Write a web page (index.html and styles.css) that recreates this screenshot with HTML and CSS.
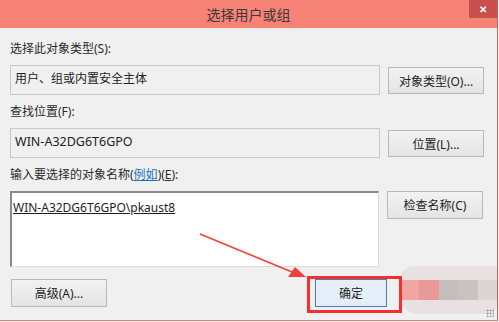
FILE: index.html
```html
<!DOCTYPE html>
<html lang="zh-CN">
<head>
  <meta charset="UTF-8" />
  <title>选择用户或组</title>
  <link rel="stylesheet" href="styles.css">
</head>
<body>
  <div class="window">
    <div class="title-bar">
      <span class="title">选择用户或组</span>
      <span class="close">&#10005;</span>
    </div>

    <div class="client">
      <div class="label">选择此对象类型(S):</div>
      <div class="row">
        <div class="field">用户、组或内置安全主体</div>
        <button class="btn">对象类型(O)...</button>
      </div>

      <div class="label">查找位置(F):</div>
      <div class="row">
        <div class="field latin">WIN-A32DG6T6GPO</div>
        <button class="btn">位置(L)...</button>
      </div>

      <div class="label">输入要选择的对象名称(<span class="link">例如</span>)(<u>E</u>):</div>
      <div class="row">
        <div class="names"><span class="name">WIN-A32DG6T6GPO\pkaust8</span></div>
        <button class="btn">检查名称(C)</button>
      </div>

      <div class="bottom-row">
        <button class="btn advanced">高级(A)...</button>
        <button class="btn ok">确定</button>
      </div>
    </div>

    <div class="blur">
      <span class="b1"></span><span class="b2"></span><span class="b3"></span><span class="b4"></span><span class="b5"></span>
    </div>
    <div class="highlight"></div>
    <svg class="arrow" width="499" height="322" viewBox="0 0 499 322">
      <line x1="200" y1="234" x2="292" y2="272" stroke="#f0403a" stroke-width="1.6" />
      <polygon points="306,277 288,277 295,267" fill="#f0403a" />
    </svg>
    <div class="grip"></div>
  </div>
</body>
</html>
```

FILE: styles.css
```css
* { box-sizing: border-box; }
html, body {
  margin: 0;
  padding: 0;
  background: #f0f0f0;
  font-family: "Noto Sans", "Noto Sans CJK SC", sans-serif;
  font-size: 12px;
  color: #222;
}
.window {
  position: relative;
  width: 498px;
  height: 321px;
  background: #f0f0f0;
  border-right: 1px solid #c9605a;
  border-bottom: 1px solid #d9837c;
  overflow: hidden;
}
.title-bar {
  position: relative;
  height: 28px;
  background: #f78276;
  display: flex;
  align-items: center;
  justify-content: center;
}
.title {
  font-family: "Noto Sans CJK SC", sans-serif;
  font-size: 14px;
  color: #3a3a3a;
}
.close {
  position: absolute;
  top: 0;
  right: 0;
  width: 28px;
  height: 18px;
  background: #c84f4d;
  color: #fff;
  font-size: 10px;
  font-weight: bold;
  display: flex;
  align-items: center;
  justify-content: center;
}
.client {
  padding: 13px 0 0 10px;
  display: flex;
  flex-direction: column;
}
.label {
  height: 16px;
  line-height: 16px;
  margin-bottom: 8px;
  color: #2a2a2a;
}
.link {
  color: #1a6fc4;
  text-decoration: underline;
}
.row {
  display: flex;
  align-items: flex-start;
  gap: 8px;
  margin-bottom: 9px;
}
.field {
  width: 370px;
  height: 30px;
  border: 1px solid #c8c8c8;
  background: #f0f0f0;
  padding: 4px 4px 0 4px;
  line-height: 18px;
}
.latin {
  font-size: 12.5px;
}
.names {
  width: 369px;
  height: 76px;
  background: #fff;
  border: 1px solid #dadada;
  border-top: 2px solid #8a8a8a;
  border-left: 2px solid #8a8a8a;
  padding: 6px 0 0 1px;
  line-height: 18px;
  font-size: 12px;
}
.name {
  text-decoration: underline;
  color: #1e1e1e;
}
.btn {
  width: 96px;
  height: 27px;
  margin-top: 2px;
  border: 1px solid #b8b8b8;
  background: linear-gradient(#f2f2f2, #e4e4e4);
  font-family: "Noto Sans", "Noto Sans CJK SC", sans-serif;
  font-size: 12px;
  color: #222;
  padding: 0;
}
.row:nth-child(6) .btn {
  margin-top: 0;
  height: 28px;
}
.bottom-row {
  display: flex;
  margin-top: 3px;
}
.advanced {
  margin-left: 1px;
  margin-top: 0;
  height: 28px;
}
.ok {
  margin-left: 208px;
  margin-top: 0;
  width: 72px;
  height: 28px;
  background: #e3eefa;
  border: 1px solid #3d7fc1;
}
.highlight {
  position: absolute;
  left: 307px;
  top: 276px;
  width: 95px;
  height: 37px;
  border: 3px solid #f5302c;
}
.blur {
  position: absolute;
  left: 400px;
  top: 266px;
  width: 97px;
  height: 48px;
  background: #e8e1e1;
  border-radius: 14px 4px 10px 18px;
  display: flex;
  align-items: center;
}
.blur span {
  height: 20px;
  flex: 1;
}
.blur .b1 { background: #f2a6a4; }
.blur .b2 { background: #e99a98; }
.blur .b3 { background: #c4bebd; }
.blur .b4 { background: #c8c3c2; }
.blur .b5 { background: #dcd6d3; }
.arrow {
  position: absolute;
  left: 0;
  top: 0;
}
.grip {
  position: absolute;
  right: 3px;
  bottom: 3px;
  width: 8px;
  height: 8px;
  background: radial-gradient(circle, #9a9a9a 0.8px, transparent 1.2px) 0 0 / 3px 3px;
}
```
